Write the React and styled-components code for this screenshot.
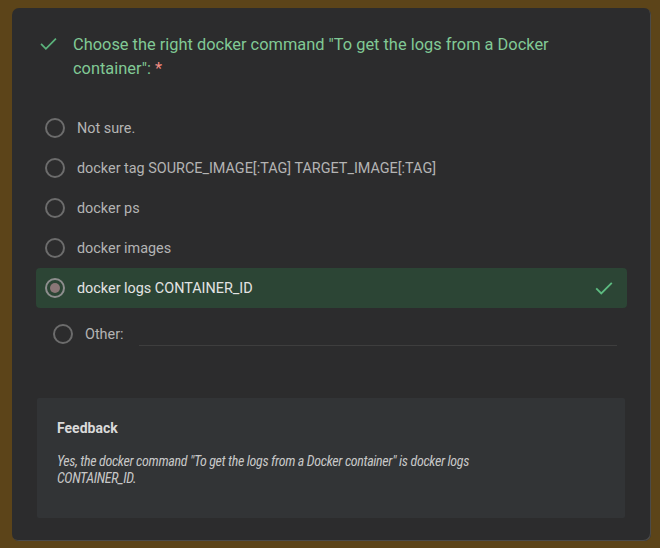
import React from "react";
import styled, { createGlobalStyle } from "styled-components";

const Global = createGlobalStyle`
  html, body { margin: 0; padding: 0; background: #5c4419; }
  body { font-family: Roboto, "Liberation Sans", sans-serif; }
`;

const Page = styled.div`
  width: 660px;
  height: 548px;
  box-sizing: border-box;
  padding: 8px 9px 7px 12px;
  background: #5c4419;
`;

const Card = styled.div`
  height: 100%;
  box-sizing: border-box;
  background: #2c2c2d;
  border-radius: 7px;
  box-shadow: inset -1px -1px 0 #4a4a4a;
  padding: 25px 24px 23px 24px;
  display: flex;
  flex-direction: column;
`;

const TitleRow = styled.div`
  display: flex;
  align-items: flex-start;
  gap: 14px;
  padding-left: 2px;
`;

const TitleText = styled.div`
  color: #81c995;
  font-size: 16.4px;
  line-height: 24px;
  width: 520px;
`;

const Req = styled.span`
  color: #f28b82;
`;

const Options = styled.div`
  margin-top: 27px;
  display: flex;
  flex-direction: column;
`;

const Row = styled.div`
  height: 40px;
  display: flex;
  align-items: center;
  padding: 0 12px 0 ${(p) => p.$indent || 9}px;
  margin-top: ${(p) => p.$gap || 0}px;
  border-radius: 4px;
  background: ${(p) => (p.$correct ? "#2c4535" : "transparent")};
  gap: 12px;
`;

const Radio = styled.span`
  width: 20px;
  height: 20px;
  box-sizing: border-box;
  border-radius: 50%;
  border: 2px solid ${(p) => (p.$checked ? "#8e8e8e" : "#6c6c6c")};
  display: flex;
  align-items: center;
  justify-content: center;
  flex-shrink: 0;
  &::after {
    content: "";
    width: 10px;
    height: 10px;
    border-radius: 50%;
    background: ${(p) => (p.$checked ? "#8a7777" : "transparent")};
  }
`;

const Label = styled.span`
  font-size: 14.4px;
  color: ${(p) => (p.$checked ? "#e3e3e3" : "#b4b4b4")};
  flex: ${(p) => (p.$grow ? 1 : "none")};
`;

const OtherLine = styled.span`
  flex: 1;
  align-self: flex-end;
  margin-bottom: 8px;
  margin-left: 3px;
  border-bottom: 1px solid #3e3e3e;
  margin-right: -2px;
`;

const Feedback = styled.div`
  margin-top: 44px;
  background: #323436;
  border-radius: 2px;
  padding: 20px 20px 30px 20px;
  margin-right: 2px;
  margin-left: 1px;
  height: 120px;
  box-sizing: border-box;
`;

const FbTitle = styled.div`
  font-size: 14px;
  font-weight: 700;
  color: #dadada;
  line-height: 20px;
`;

const FbText = styled.div`
  margin-top: 15px;
  font-size: 14px;
  font-style: italic;
  font-stretch: 75%;
  letter-spacing: -0.35px;
  color: #c8c8c8;
  line-height: 17px;
  width: 420px;
`;

const Check = ({ size = 20, color = "#5bb37b" }) => (
  <svg width={size} height={size} viewBox="0 0 24 24" fill="none">
    <path d="M3.5 12.5 L9 18 L20.5 6.5" stroke={color} strokeWidth="2" />
  </svg>
);

const opts = [
  "Not sure.",
  "docker tag SOURCE_IMAGE[:TAG] TARGET_IMAGE[:TAG]",
  "docker ps",
  "docker images",
];

export default function App() {
  return (
    <>
      <Global />
      <Page>
        <Card>
          <TitleRow>
            <Check size={21} />
            <TitleText>
              Choose the right docker command "To get the logs from a Docker
              container": <Req>*</Req>
            </TitleText>
          </TitleRow>
          <Options>
            {opts.map((o) => (
              <Row key={o}>
                <Radio />
                <Label>{o}</Label>
              </Row>
            ))}
            <Row $correct>
              <Radio $checked />
              <Label $checked $grow>
                docker logs CONTAINER_ID
              </Label>
              <Check size={22} color="#5dbb80" />
            </Row>
            <Row $indent={17} $gap={6}>
              <Radio />
              <Label>Other:</Label>
              <OtherLine />
            </Row>
          </Options>
          <Feedback>
            <FbTitle>Feedback</FbTitle>
            <FbText>
              Yes, the docker command "To get the logs from a Docker container"
              is docker logs CONTAINER_ID.
            </FbText>
          </Feedback>
        </Card>
      </Page>
    </>
  );
}
